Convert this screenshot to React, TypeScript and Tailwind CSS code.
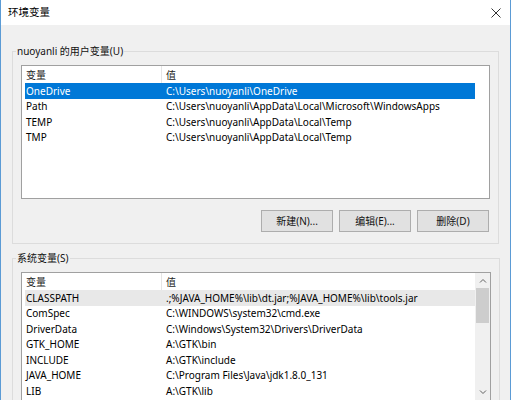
import React from "react";

const font = { fontFamily: '"Noto Sans", "Noto Sans CJK SC", sans-serif' };

type Row = [string, string];

const userRows: Row[] = [
  ["OneDrive", "C:\\Users\\nuoyanli\\OneDrive"],
  ["Path", "C:\\Users\\nuoyanli\\AppData\\Local\\Microsoft\\WindowsApps"],
  ["TEMP", "C:\\Users\\nuoyanli\\AppData\\Local\\Temp"],
  ["TMP", "C:\\Users\\nuoyanli\\AppData\\Local\\Temp"],
];

const sysRows: Row[] = [
  ["CLASSPATH", ".;%JAVA_HOME%\\lib\\dt.jar;%JAVA_HOME%\\lib\\tools.jar"],
  ["ComSpec", "C:\\WINDOWS\\system32\\cmd.exe"],
  ["DriverData", "C:\\Windows\\System32\\Drivers\\DriverData"],
  ["GTK_HOME", "A:\\GTK\\bin"],
  ["INCLUDE", "A:\\GTK\\include"],
  ["JAVA_HOME", "C:\\Program Files\\Java\\jdk1.8.0_131"],
  ["LIB", "A:\\GTK\\lib"],
];

function Header() {
  return (
    <div className="flex h-[17px] items-center text-[#1e1e1e] shrink-0">
      <div className="w-[140px] h-full flex items-center pl-[4px] border-r border-[#e5e5e5]">变量</div>
      <div className="pl-[4px]">值</div>
    </div>
  );
}

function ListRow({ row, mode }: { row: Row; mode: "sel" | "gray" | "none" }) {
  const bg =
    mode === "sel" ? "bg-[#0078d7] text-white" : mode === "gray" ? "bg-[#e8e8e8] text-black" : "text-black";
  return (
    <div className={`ml-[3px] w-[450px] h-[15.5px] shrink-0 flex items-center whitespace-nowrap ${bg}`}>
      <div className="w-[137px] pl-[1px]">{row[0]}</div>
      <div className="pl-[4px]">{row[1]}</div>
    </div>
  );
}

function Buttons() {
  const labels = ["新建(N)...", "编辑(E)...", "删除(D)"];
  return (
    <div className="flex justify-end gap-[6px] mt-[11px] mr-[9px]">
      {labels.map((l) => (
        <div
          key={l}
          className="w-[72px] h-[22px] flex items-center justify-center bg-[#e1e1e1] border border-[#adadad] text-[#111]"
        >
          {l}
        </div>
      ))}
    </div>
  );
}

function Chevron({ up }: { up: boolean }) {
  return (
    <svg width="8" height="5" viewBox="0 0 8 5">
      <path
        d={up ? "M1 4.5 L4 1.5 L7 4.5" : "M1 0.5 L4 3.5 L7 0.5"}
        fill="none"
        stroke="#606060"
        strokeWidth="1"
      />
    </svg>
  );
}

export default function App() {
  return (
    <div
      className="w-[511px] h-[400px] overflow-hidden bg-[#f0f0f0] border-l border-r border-[#5b9bd5] flex flex-col text-[10px] leading-none"
      style={font}
    >
      {/* title bar */}
      <div className="h-[25px] bg-white flex items-center justify-between pl-[7px] pr-[9px] shrink-0">
        <span className="text-[10.5px] text-black">环境变量</span>
        <svg width="10" height="10" viewBox="0 0 10 10">
          <path d="M0.5 0.5 L9.5 9.5 M9.5 0.5 L0.5 9.5" stroke="#333" strokeWidth="1" />
        </svg>
      </div>

      <div className="px-[11px] pt-[21px] flex flex-col">
        {/* user vars */}
        <fieldset className="border border-[#dcdcdc] h-[198px] flex flex-col">
          <legend className="ml-[3px] px-[1px] text-[#111]">nuoyanli 的用户变量(U)</legend>
          <div className="mt-[9px] mx-[8px] h-[134px] bg-white border border-[#a0a0a0] flex flex-col">
            <Header />
            {userRows.map((r, i) => (
              <ListRow key={r[0]} row={r} mode={i === 0 ? "sel" : "none"} />
            ))}
          </div>
          <Buttons />
        </fieldset>

        {/* system vars */}
        <fieldset className="mt-[9px] border border-[#dcdcdc] h-[200px] flex flex-col">
          <legend className="ml-[3px] px-[1px] text-[#111]">系统变量(S)</legend>
          <div className="mt-[9px] mx-[8px] h-[160px] bg-white border border-[#a0a0a0] flex">
            <div className="flex-1 flex flex-col">
              <Header />
              {sysRows.map((r, i) => (
                <ListRow key={r[0]} row={r} mode={i === 0 ? "gray" : "none"} />
              ))}
            </div>
            <div className="w-[15px] bg-[#f0f0f0] flex flex-col h-[127px]">
              <div className="h-[15px] flex items-center justify-center">
                <Chevron up />
              </div>
              <div className="mx-[1px] h-[35px] bg-[#cdcdcd]" />
              <div className="flex-1" />
              <div className="h-[15px] flex items-center justify-center">
                <Chevron up={false} />
              </div>
            </div>
          </div>
        </fieldset>
      </div>
    </div>
  );
}
